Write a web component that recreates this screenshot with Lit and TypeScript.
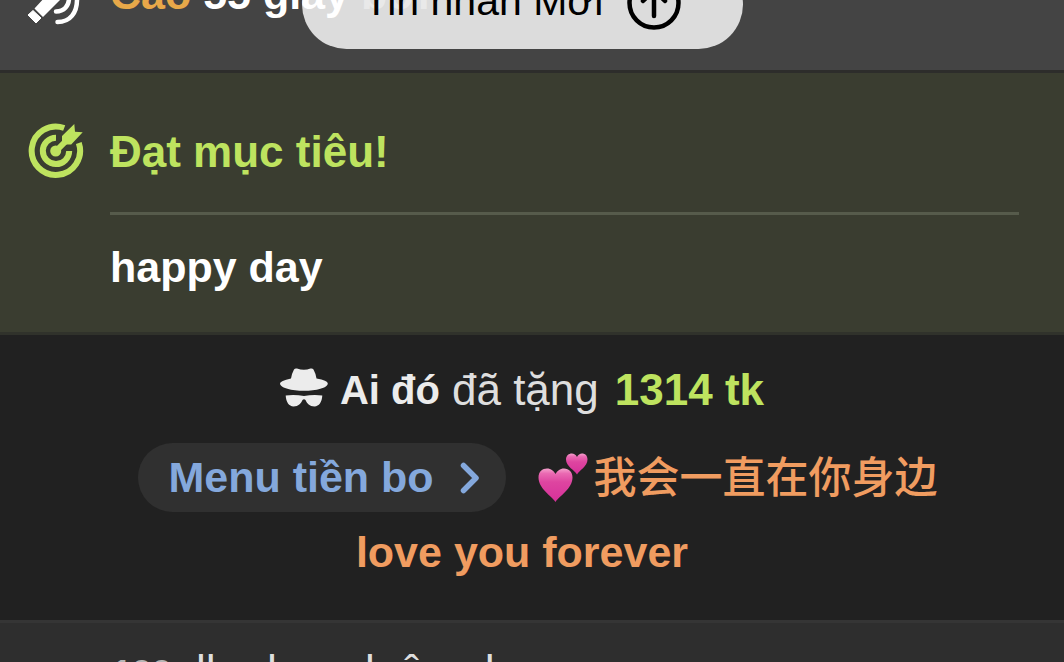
import { LitElement, html, css } from "lit";
import { customElement } from "lit/decorators.js";

@customElement("app-root")
export class AppRoot extends LitElement {
  static styles = css`
    :host {
      display: block;
      position: relative;
      height: 100vh;
      overflow: hidden;
      background: #2e2e2e;
      color: #fff;
      font-family: "Liberation Sans", "Noto Sans CJK SC", Arial, sans-serif;
      font-size: 43px;
      line-height: 50px;
      font-weight: 700;
    }
    * { box-sizing: border-box; }
    p, h2 { margin: 0; font: inherit; }
    svg { display: block; flex: none; }
    .feed { display: flex; flex-direction: column; height: 100%; }
    .row { flex: none; border-bottom: 3px solid #353535; }
    .toy {
      display: flex;
      align-items: flex-end;
      gap: 24px;
      height: 73px;
      padding: 0 44px 40px 26px;
      overflow: hidden;
      background: #444;
      border-color: #2d2d2b;
    }
    .toy p { white-space: nowrap; padding-bottom: 11px; }
    .level { color: #e8a849; }
    .by { color: #888; }
    .jump {
      position: absolute;
      top: -40px;
      left: 50%;
      width: 441px;
      height: 89px;
      translate: -230px 0;
      display: flex;
      align-items: center;
      justify-content: center;
      gap: 24px;
      padding: 0 0 4px;
      border: 0;
      border-radius: 45px;
      background: rgb(255 255 255 / 81%);
      color: #000;
      font: 400 41px/50px "Liberation Sans", Arial, sans-serif;
    }
    .jump span { padding-bottom: 4px; }
    .goal {
      display: grid;
      grid-template-columns: 60px 1fr;
      column-gap: 24px;
      padding: 48px 45px 39px 26px;
      background: #3a3d30;
      border-color: #30322b;
    }
    .goal h2 {
      padding: 6px 0 35px;
      border-bottom: 3px solid #565b4b;
      color: #bee35f;
      font-size: 44px;
    }
    .goal p { grid-column: 2; padding-top: 26px; line-height: 52px; }
    .tip {
      display: flex;
      flex-direction: column;
      align-items: center;
      padding: 30px 20px 43px 0;
      background: #212121;
    }
    .line { display: flex; align-items: center; white-space: nowrap; }
    .who { font-size: 40px; color: #ececec; margin: 0 12px; }
    .gave { font-size: 44px; font-weight: 400; color: #dedede; margin-right: 16px; }
    .amount { font-size: 44px; color: #bee35f; }
    .second { margin-top: 28px; }
    .menu {
      display: flex;
      align-items: center;
      gap: 26px;
      height: 69px;
      margin: 0 32px;
      padding: 0 26px 0 30px;
      border: 0;
      border-radius: 35px;
      background: #303030;
      color: #84a8dc;
      font: inherit;
    }
    .menu span { padding-bottom: 2px; }
    .note { color: #f09c60; }
    .cjk { font-weight: 500; margin-left: 6px; }
    .last { margin-top: 15px; }
    .next {
      display: flex;
      align-items: baseline;
      gap: 24px;
      padding: 23px 44px 0 112px;
      border: 0;
      color: #dedede;
      font-size: 44px;
      font-weight: 400;
      white-space: nowrap;
    }
    .count { font-size: 36px; color: #b5b5b5; font-weight: 700; }
  `;

  render() {
    return html`
      <main class="feed">
        <section class="row toy">
          <svg width="60" height="60" viewBox="0 0 60 60" fill="#fff" aria-hidden="true">
            <path d="M2 45 7 40.500 15 48 10 53Z" stroke="#fff" stroke-width="1" stroke-linejoin="round" />
            <path d="M8.500 38.500 31 14Q37 9 42 14T42 22L17 47Z" />
            <g fill="none" stroke="#fff" stroke-width="4.500" stroke-linecap="round">
              <path d="M30 41.500C38 41.500 43 36 43 28" />
              <path d="M31.500 52C44 52 51.500 43 51 28" />
            </g>
          </svg>
          <p><span class="level">Cao</span> 55 giây <span class="by">bởi</span></p>
        </section>
        <section class="row goal">
          <svg width="60" height="60" viewBox="-2 -2 60 60" fill="none" stroke="#bee35f" stroke-width="6" aria-hidden="true">
            <path d="M36.200 5A24.200 24.200 0 1 0 50.800 20" />
            <path d="M28 14.700A13.200 13.200 0 1 0 41.200 28" />
            <path d="M28 28 41 15" />
            <circle cx="27.700" cy="28" r="5.500" fill="#bee35f" stroke="none" />
            <path d="M34 13 46.300 1 47 8.700 54.700 9.300 43.200 21.500 34 21.500Z" fill="#bee35f" stroke="none" />
          </svg>
          <h2>Đạt mục tiêu!</h2>
          <p>happy day</p>
        </section>
        <section class="row tip">
          <p class="line">
            <svg width="48" height="44" viewBox="0 0 48 44" fill="#ececec" aria-hidden="true">
              <path d="M14 1.500Q15 0 17 .500 24 3 30.500 .500 32.500 0 33.500 1.500 35.500 5 36.500 10.500 47.800 12.500 47.800 15.500C47.800 20 36 22.800 24 22.800S0 20 0 15.500Q0 13 11 10.500 12 5 14 1.500Z" />
              <path d="M5.700 27.500Q15 26.500 24 28 33 26.500 42.300 27.500C42 34 39 38.400 34.500 38.400 29.500 38.400 27 35.500 25.500 32Q24 30.500 22.500 32C21 35.500 18.500 38.400 13.500 38.400 9 38.400 6 34 5.700 27.500Z" />
            </svg>
            <span class="who">Ai đó</span><span class="gave">đã tặng</span><span class="amount">1314 tk</span>
          </p>
          <div class="line second">
            <button class="menu" type="button">
              <span>Menu tiền bo</span>
              <svg width="20" height="32" viewBox="0 0 20 32" fill="none" stroke="#84a8dc" stroke-width="5.500" stroke-linecap="round" stroke-linejoin="round" aria-hidden="true">
                <path d="M3.500 3.500 16 16 3.500 28.500" />
              </svg>
            </button>
            <svg width="50" height="50" viewBox="0 0 50 50" role="img" aria-label="💕">
              <defs>
                <linearGradient id="pink" x1="0" y1="0" x2="0" y2="1">
                  <stop offset="0" stop-color="#f4a0cc" />
                  <stop offset=".15" stop-color="#ea6ab2" />
                  <stop offset=".4" stop-color="#de45a0" />
                  <stop offset="1" stop-color="#d6309a" />
                </linearGradient>
              </defs>
              <path fill="url(#pink)" d="M17.500 49C14 43 .500 36 .500 24.500.500 18.500 4.500 15.500 9 15.500 13 15.500 16 18 17.500 21 19 18 22 15.500 26 15.500 31 15.500 34.500 19 34.500 24.500 34.500 36 21 43 17.500 49Z" />
              <path fill="url(#pink)" d="M39 21.500C37 17.500 28 13.500 28 6.500 28 2.500 31 .500 33.700 .500 36 .500 38 2 39 4 40 2 42 .500 44 .500 47 .500 49.500 2.500 49.500 6.500 49.500 13.500 41 17.500 39 21.500Z" />
            </svg>
            <span class="note cjk">我会一直在你身边</span>
          </div>
          <p class="note last">love you forever</p>
        </section>
        <section class="row next"><span class="count">199</span><span>lh nha e luôn nha</span></section>
      </main>
      <button class="jump" type="button">
        <span>Tin nhắn Mới</span>
        <svg width="54" height="54" viewBox="0 0 54 54" fill="none" stroke="#000" stroke-width="4.500" stroke-linecap="round" stroke-linejoin="round" aria-hidden="true">
          <circle cx="27" cy="27" r="24.500" />
          <path d="M27 40V14M16 25 27 14 38 25" />
        </svg>
      </button>
    `;
  }
}
